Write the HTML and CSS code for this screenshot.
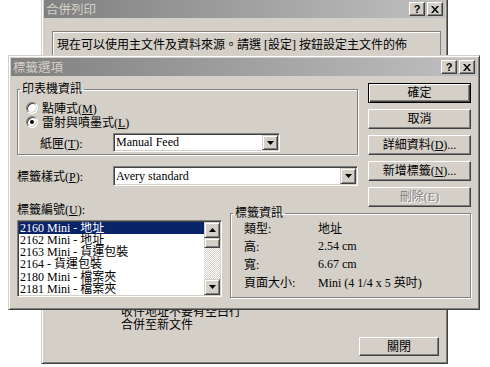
FILE: index.html
```html
<!DOCTYPE html>
<html lang="zh-Hant">
<head>
    <meta charset="UTF-8">
    <title>標籤選項</title>
    <link rel="stylesheet" href="styles.css">
</head>
<body>

<div class="desk">
    <!-- 合併列印 (ventana de fondo) -->
    <div class="win win-back">
        <div class="titlebar">
            <span class="title">合併列印</span>
            <div class="tbtns">
                <span class="tbtn">?</span>
                <span class="tbtn"><svg width="8" height="7" viewBox="0 0 8 7"><path d="M0 0h2l2 2.4L6 0h2L5 3.5 8 7H6L4 4.6 2 7H0l3-3.5z"/></svg></span>
            </div>
        </div>
        <div class="back-body">
            <div class="frame">
                <p>現在可以使用主文件及資料來源。請選 [設定] 按鈕設定主文件的佈</p>
            </div>
            <div class="notes">
                <p>收件地址不要有空白行</p>
                <p>合併至新文件</p>
            </div>
            <div class="back-actions">
                <span class="btn btn-close">關閉</span>
            </div>
        </div>
    </div>

    <!-- 標籤選項 -->
    <div class="win win-front">
        <div class="titlebar">
            <span class="title">標籤選項</span>
            <div class="tbtns">
                <span class="tbtn">?</span>
                <span class="tbtn"><svg width="8" height="7" viewBox="0 0 8 7"><path d="M0 0h2l2 2.4L6 0h2L5 3.5 8 7H6L4 4.6 2 7H0l3-3.5z"/></svg></span>
            </div>
        </div>
        <div class="front-body">
            <div class="top">
                <div class="left">
                    <fieldset class="group group-printer">
                        <legend>印表機資訊</legend>
                        <div class="radio-row"><span class="radio"></span><span>點陣式(<u>M</u>)</span></div>
                        <div class="radio-row"><span class="radio checked"></span><span>雷射與噴墨式(<u>L</u>)</span></div>
                        <div class="field-row tray">
                            <span class="field-label tray-label">紙匣(<u>T</u>):</span>
                            <div class="combo combo-tray">
                                <span class="combo-val">Manual Feed</span>
                                <span class="drop"><svg width="7" height="4" viewBox="0 0 7 4"><path d="M0 0h7L3.5 4z"/></svg></span>
                            </div>
                        </div>
                    </fieldset>
                    <div class="field-row style-row">
                        <span class="field-label style-label">標籤樣式(<u>P</u>):</span>
                        <div class="combo combo-style">
                            <span class="combo-val">Avery standard</span>
                            <span class="drop"><svg width="7" height="4" viewBox="0 0 7 4"><path d="M0 0h7L3.5 4z"/></svg></span>
                        </div>
                    </div>
                </div>
                <div class="actions">
                    <span class="btn btn-default">確定</span>
                    <span class="btn">取消</span>
                    <span class="btn"><span>詳細資料(<u>D</u>)...</span></span>
                    <span class="btn"><span>新增標籤(<u>N</u>)...</span></span>
                    <span class="btn disabled">刪除(E)</span>
                </div>
            </div>

            <div class="bottom">
                <div class="list-col">
                    <div class="list-label">標籤編號(<u>U</u>):</div>
                    <div class="listbox">
                        <div class="items">
                            <div class="item selected">2160 Mini - 地址</div>
                            <div class="item">2162 Mini - 地址</div>
                            <div class="item">2163 Mini - 貨運包裝</div>
                            <div class="item">2164 - 貨運包裝</div>
                            <div class="item">2180 Mini - 檔案夾</div>
                            <div class="item">2181 Mini - 檔案夾</div>
                        </div>
                        <div class="scrollbar">
                            <span class="sb-btn"><svg width="7" height="4" viewBox="0 0 7 4"><path d="M0 4h7L3.5 0z"/></svg></span>
                            <span class="sb-thumb"></span>
                            <span class="sb-track"></span>
                            <span class="sb-btn"><svg width="7" height="4" viewBox="0 0 7 4"><path d="M0 0h7L3.5 4z"/></svg></span>
                        </div>
                    </div>
                </div>
                <fieldset class="group group-info">
                    <legend>標籤資訊</legend>
                    <div class="info-grid">
                        <span>類型:</span><span>地址</span>
                        <span>高:</span><span>2.54 cm</span>
                        <span>寬:</span><span>6.67 cm</span>
                        <span>頁面大小:</span><span>Mini (4 1/4 x 5 英吋)</span>
                    </div>
                </fieldset>
            </div>
        </div>
    </div>
</div>

</body>
</html>
```

FILE: styles.css
```css
/* Estilos base */
* {
    box-sizing: border-box;
}
body {
    margin: 0;
    background-color: #fff;
    font-family: "Liberation Serif", "Noto Sans CJK TC", serif;
    font-size: 12px;
    color: #000;
}
p {
    margin: 0;
}
u {
    text-decoration-thickness: 1px;
    text-underline-offset: 1px;
}
.desk {
    position: relative;
    width: 490px;
    height: 367px;
    overflow: hidden;
}

/* Ventanas */
.win {
    position: absolute;
    display: flex;
    flex-direction: column;
    padding: 2px;
    background-color: #d4d0c8;
    border: 1px solid;
    border-color: #d4d0c8 #404040 #404040 #d4d0c8;
    box-shadow: inset 1px 1px #fff, inset -1px -1px #808080;
}
.win-back {
    left: 41px;
    top: -3px;
    width: 407px;
    height: 367px;
}
.win-front {
    left: 8px;
    top: 55px;
    width: 472px;
    height: 255px;
}
.titlebar {
    flex: none;
    height: 18px;
    display: flex;
    align-items: center;
    justify-content: space-between;
    padding: 0 2px 0 2px;
    background: linear-gradient(to right, #808080, #c0c0c0);
    color: #d4d0c8;
    font-family: "Noto Sans CJK TC", sans-serif;
    font-size: 12.5px;
    line-height: 18px;
}
.tbtns {
    display: flex;
    gap: 2px;
}
.tbtn {
    width: 16px;
    height: 14px;
    display: flex;
    align-items: center;
    justify-content: center;
    background-color: #d4d0c8;
    border: 1px solid;
    border-color: #fff #404040 #404040 #fff;
    box-shadow: inset -1px -1px #808080;
    color: #000;
    font: bold 11px "Liberation Sans", sans-serif;
}

/* Botones */
.btn {
    height: 20px;
    display: flex;
    align-items: center;
    justify-content: center;
    background-color: #d4d0c8;
    border: 1px solid;
    border-color: #fff #404040 #404040 #fff;
    box-shadow: inset -1px -1px #808080;
    line-height: 14px;
}
.btn-default {
    border-color: #000;
    box-shadow: inset 1px 1px #fff, inset -1px -1px #404040, inset -2px -2px #808080;
}
.btn.disabled {
    color: #808080;
    text-shadow: 1px 1px 0 #fff;
}

/* Ventana de fondo */
.back-body {
    flex: 1;
    display: flex;
    flex-direction: column;
    padding: 13px 4px 0 8px;
}
.frame {
    height: 260px;
    padding: 6px 0 0 4px;
    border: 1px solid #808080;
    box-shadow: inset 1px 1px #fff;
    line-height: 14px;
}
.notes {
    margin: 15px 0 0 69px;
    line-height: 13px;
}
.back-actions {
    display: flex;
    justify-content: flex-end;
    margin-top: 5px;
    padding-right: 2px;
}
.btn-close {
    width: 80px;
    height: 19px;
}

/* Ventana principal */
.front-body {
    flex: 1;
    padding: 7px 6px 0 6px;
}
.top {
    display: flex;
    gap: 10px;
}
.left {
    width: 341px;
}
.group {
    margin: 0;
    min-width: 0;
    border: 1px solid #808080;
    box-shadow: inset 1px 1px #fff, 1px 1px #fff;
}
.group legend {
    padding: 0 2px;
    line-height: 12px;
}
.group-printer {
    padding: 6px 8px 2px 8px;
}
.group-printer legend {
    margin-left: -6px;
}
.radio-row {
    height: 14px;
    display: flex;
    align-items: center;
    gap: 4px;
}
.radio {
    position: relative;
    width: 12px;
    height: 12px;
    border-radius: 50%;
    background-color: #fff;
    border: 1px solid;
    border-color: #808080 #fff #fff #808080;
    box-shadow: inset 1px 1px #404040, inset -1px -1px #d4d0c8;
}
.radio.checked::after {
    content: "";
    position: absolute;
    left: 3px;
    top: 3px;
    width: 4px;
    height: 4px;
    border-radius: 50%;
    background-color: #000;
}
.field-row {
    display: flex;
    align-items: center;
}
.tray {
    margin-top: 4px;
}
.tray-label {
    width: 73px;
    margin-left: 14px;
}
.style-row {
    margin-top: 11px;
}
.style-label {
    width: 96px;
}
.combo {
    display: flex;
    padding: 1px;
    background-color: #fff;
    border: 1px solid;
    border-color: #808080 #fff #fff #808080;
    box-shadow: inset 1px 1px #404040, inset -1px -1px #d4d0c8;
}
.combo-tray {
    width: 167px;
    height: 19px;
}
.combo-style {
    width: 245px;
    height: 20px;
}
.combo-val {
    flex: 1;
    display: flex;
    align-items: center;
    padding-left: 1px;
    font-size: 12px;
}
.drop,
.sb-btn {
    width: 16px;
    display: flex;
    align-items: center;
    justify-content: center;
    background-color: #d4d0c8;
    border: 1px solid;
    border-color: #d4d0c8 #404040 #404040 #d4d0c8;
    box-shadow: inset 1px 1px #fff, inset -1px -1px #808080;
}
.actions {
    width: 103px;
    display: flex;
    flex-direction: column;
    gap: 6px;
}

/* Lista e informacion */
.bottom {
    display: flex;
    gap: 8px;
    margin-top: -4px;
}
.list-col {
    width: 205px;
}
.list-label {
    line-height: 14px;
    margin-bottom: 3px;
}
.listbox {
    height: 77px;
    display: flex;
    padding: 1px;
    background-color: #fff;
    border: 1px solid;
    border-color: #808080 #fff #fff #808080;
    box-shadow: inset 1px 1px #404040, inset -1px -1px #d4d0c8;
}
.items {
    flex: 1;
    overflow: hidden;
}
.item {
    height: 12.17px;
    line-height: 12.17px;
    padding-left: 1px;
    white-space: nowrap;
}
.item.selected {
    background-color: #0a246a;
    color: #fff;
}
.scrollbar {
    width: 16px;
    display: flex;
    flex-direction: column;
}
.sb-btn {
    height: 16px;
    flex: none;
}
.sb-thumb {
    height: 10px;
    flex: none;
    background-color: #d4d0c8;
    border: 1px solid;
    border-color: #d4d0c8 #404040 #404040 #d4d0c8;
    box-shadow: inset 1px 1px #fff, inset -1px -1px #808080;
}
.sb-track {
    flex: 1;
    background: repeating-conic-gradient(#d4d0c8 0 25%, #fff 0 50%) 0 0 / 2px 2px;
}
.group-info {
    flex: 1;
    height: 91px;
    margin-top: 4px;
    padding: 0 6px 6px 13px;
}
.group-info legend {
    margin-left: -11px;
}
.info-grid {
    display: grid;
    grid-template-columns: 74px 1fr;
    grid-auto-rows: 18px;
    align-items: center;
}
```
